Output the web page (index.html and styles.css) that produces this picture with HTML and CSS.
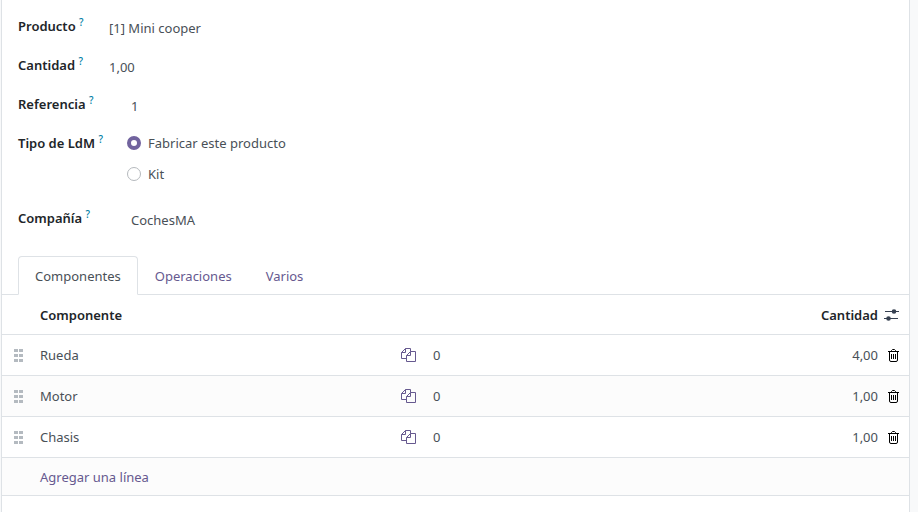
FILE: index.html
```html
<!DOCTYPE html>
<html lang="es">
<head>
<meta charset="utf-8">
<title>Lista de materiales</title>
<link rel="stylesheet" href="styles.css">
</head>
<body>
<svg class="sprite" aria-hidden="true">
  <symbol id="grip" viewBox="0 0 9 13">
    <path d="M0 0h4v3H0zM5 0h4v3H5zM0 5h4v3H0zM5 5h4v3H5zM0 10h4v3H0zM5 10h4v3H5z" fill="currentColor"/>
  </symbol>
  <symbol id="copy" viewBox="0 0 15 15">
    <g fill="none" stroke="currentColor">
      <path d="M5.500 10.500H.5V4.500L4.500.5H9.500V3.500M4.500.5V4.500H.5"/>
      <path d="M5.500 7.500L9.500 3.500H14.500V13.500H5.500zM9.500 3.500V7.500H5.500"/>
    </g>
  </symbol>
  <symbol id="sliders" viewBox="0 0 15 12">
    <path d="M1 2.500h14M0 9.500h14" stroke="currentColor" fill="none"/>
    <circle cx="10" cy="2.500" r="2.300" fill="currentColor"/>
    <circle cx="4.500" cy="9.500" r="2.300" fill="currentColor"/>
  </symbol>
  <symbol id="trash" viewBox="0 0 11 13">
    <path d="M0 2.500h11M3.500 2.500V1.500L4.500.5h2l1 1v1M1.500 2.500v8.500q0 1.500 1.500 1.500h5q1.500 0 1.500-1.500V2.500M3.500 5v5M5.500 5v5M7.500 5v5" stroke="currentColor" fill="none"/>
  </symbol>
</svg>
<main class="sheet">
  <form class="fields">
    <label class="name" for="producto">Producto <sup>?</sup></label>
    <input class="value" id="producto" type="text" value="[1] Mini cooper">
    <label class="name" for="cantidad">Cantidad <sup>?</sup></label>
    <input class="value" id="cantidad" type="text" value="1,00">
    <label class="name" for="referencia">Referencia <sup>?</sup></label>
    <input class="value indented" id="referencia" type="text" value="1">
    <span class="name" id="tipo">Tipo de LdM <sup>?</sup></span>
    <div class="options" role="radiogroup" aria-labelledby="tipo">
      <label class="option"><input type="radio" name="tipo" checked>Fabricar este producto</label>
      <label class="option"><input type="radio" name="tipo">Kit</label>
    </div>
    <label class="name" for="compania">Compañía <sup>?</sup></label>
    <input class="value indented" id="compania" type="text" value="CochesMA">
  </form>
  <nav class="tabs">
    <a class="tab active" href="#componentes">Componentes</a>
    <a class="tab" href="#operaciones">Operaciones</a>
    <a class="tab" href="#varios">Varios</a>
  </nav>
  <table class="lines" id="componentes">
    <colgroup><col class="c-grip"><col class="c-name"><col class="c-copy"><col><col class="c-qty"><col class="c-act"></colgroup>
    <thead>
      <tr><th></th><th>Componente</th><th></th><th></th><th class="num">Cantidad</th><th><button type="button" class="icon" aria-label="Columnas opcionales"><svg width="15" height="12"><use href="#sliders"/></svg></button></th></tr>
    </thead>
    <tbody>
      <tr><td class="grip"><svg width="9" height="13"><use href="#grip"/></svg></td><td>Rueda</td><td><button type="button" class="icon copy" aria-label="Variantes"><svg width="15" height="15"><use href="#copy"/></svg></button></td><td>0</td><td class="num">4,00</td><td><button type="button" class="icon trash" aria-label="Eliminar"><svg width="11" height="13"><use href="#trash"/></svg></button></td></tr>
      <tr><td class="grip"><svg width="9" height="13"><use href="#grip"/></svg></td><td>Motor</td><td><button type="button" class="icon copy" aria-label="Variantes"><svg width="15" height="15"><use href="#copy"/></svg></button></td><td>0</td><td class="num">1,00</td><td><button type="button" class="icon trash" aria-label="Eliminar"><svg width="11" height="13"><use href="#trash"/></svg></button></td></tr>
      <tr><td class="grip"><svg width="9" height="13"><use href="#grip"/></svg></td><td>Chasis</td><td><button type="button" class="icon copy" aria-label="Variantes"><svg width="15" height="15"><use href="#copy"/></svg></button></td><td>0</td><td class="num">1,00</td><td><button type="button" class="icon trash" aria-label="Eliminar"><svg width="11" height="13"><use href="#trash"/></svg></button></td></tr>
      <tr class="add"><td></td><td colspan="5"><a href="#agregar">Agregar una línea</a></td></tr>
    </tbody>
  </table>
</main>
</body>
</html>
```

FILE: styles.css
```css
* { box-sizing: border-box; }

body {
  margin: 0;
  padding: 0 8px 0 1px;
  background: #f8f9fa;
  color: #495057;
  font: 13px/20px "Noto Sans", "Open Sans", sans-serif;
}

.sprite { position: absolute; width: 0; height: 0; }

.sheet {
  min-height: 100vh;
  background: #fff;
  border: solid #dee2e6;
  border-width: 0 1px;
}

.fields {
  display: grid;
  grid-template-columns: 91px 1fr;
  padding: 7px 16px 18px;
}

.name {
  padding-top: 9px;
  min-height: 39px;
  color: #212529;
  font-weight: 600;
  white-space: nowrap;
}

.name sup {
  color: #0180a5;
  font-size: 10px;
  font-weight: 500;
  line-height: 0;
  vertical-align: 5px;
}

.value {
  height: 39px;
  padding: 2px 0 0;
  border: 0;
  background: none;
  color: inherit;
  font: inherit;
}

.value.indented { padding-left: 22px; }

.options {
  display: grid;
  gap: 11px;
  padding: 9px 0 15px 18px;
}

.option { display: flex; align-items: center; gap: 7px; }

.option input {
  appearance: none;
  width: 14px;
  height: 14px;
  margin: 0;
  border: 1px solid #b5b9bd;
  border-radius: 50%;
  background: #fff;
}

.option input:checked { border: 4px solid #71639e; }

.tabs {
  display: flex;
  padding-left: 16px;
  border-bottom: 1px solid #dee2e6;
}

.tab {
  height: 39px;
  margin-bottom: -1px;
  padding: 9px 16px;
  border: 1px solid transparent;
  border-radius: 4px 4px 0 0;
  color: #66598f;
  text-decoration: none;
}

.tab.active {
  border-color: #dee2e6 #dee2e6 #fff;
  background: #fff;
  color: #495057;
}

.lines {
  width: 100%;
  table-layout: fixed;
  border-collapse: separate;
  border-spacing: 0;
}

.c-grip { width: 38px; }
.c-name { width: 361px; }
.c-copy { width: 32px; }
.c-qty { width: 100px; }
.c-act { width: 31px; }

.lines th,
.lines td {
  height: 41px;
  padding: 0;
  border-bottom: 1px solid #dee2e6;
  text-align: left;
}

.lines th { height: 40px; color: #212529; font-weight: 600; }
.lines .num { text-align: right; }
.lines tbody tr:nth-child(even) { background: #fcfcfc; }
.lines .add td { height: 38px; }
.lines a { color: #66598f; text-decoration: none; }

.lines svg { display: block; }
.grip svg { margin-left: 12px; color: #b4bac0; }

.icon {
  display: block;
  padding: 0;
  border: 0;
  background: none;
  color: #374151;
}

th .icon { margin-left: 6px; }
.copy { color: #66598f; }
.trash { margin-left: 10px; color: #000; }
```
